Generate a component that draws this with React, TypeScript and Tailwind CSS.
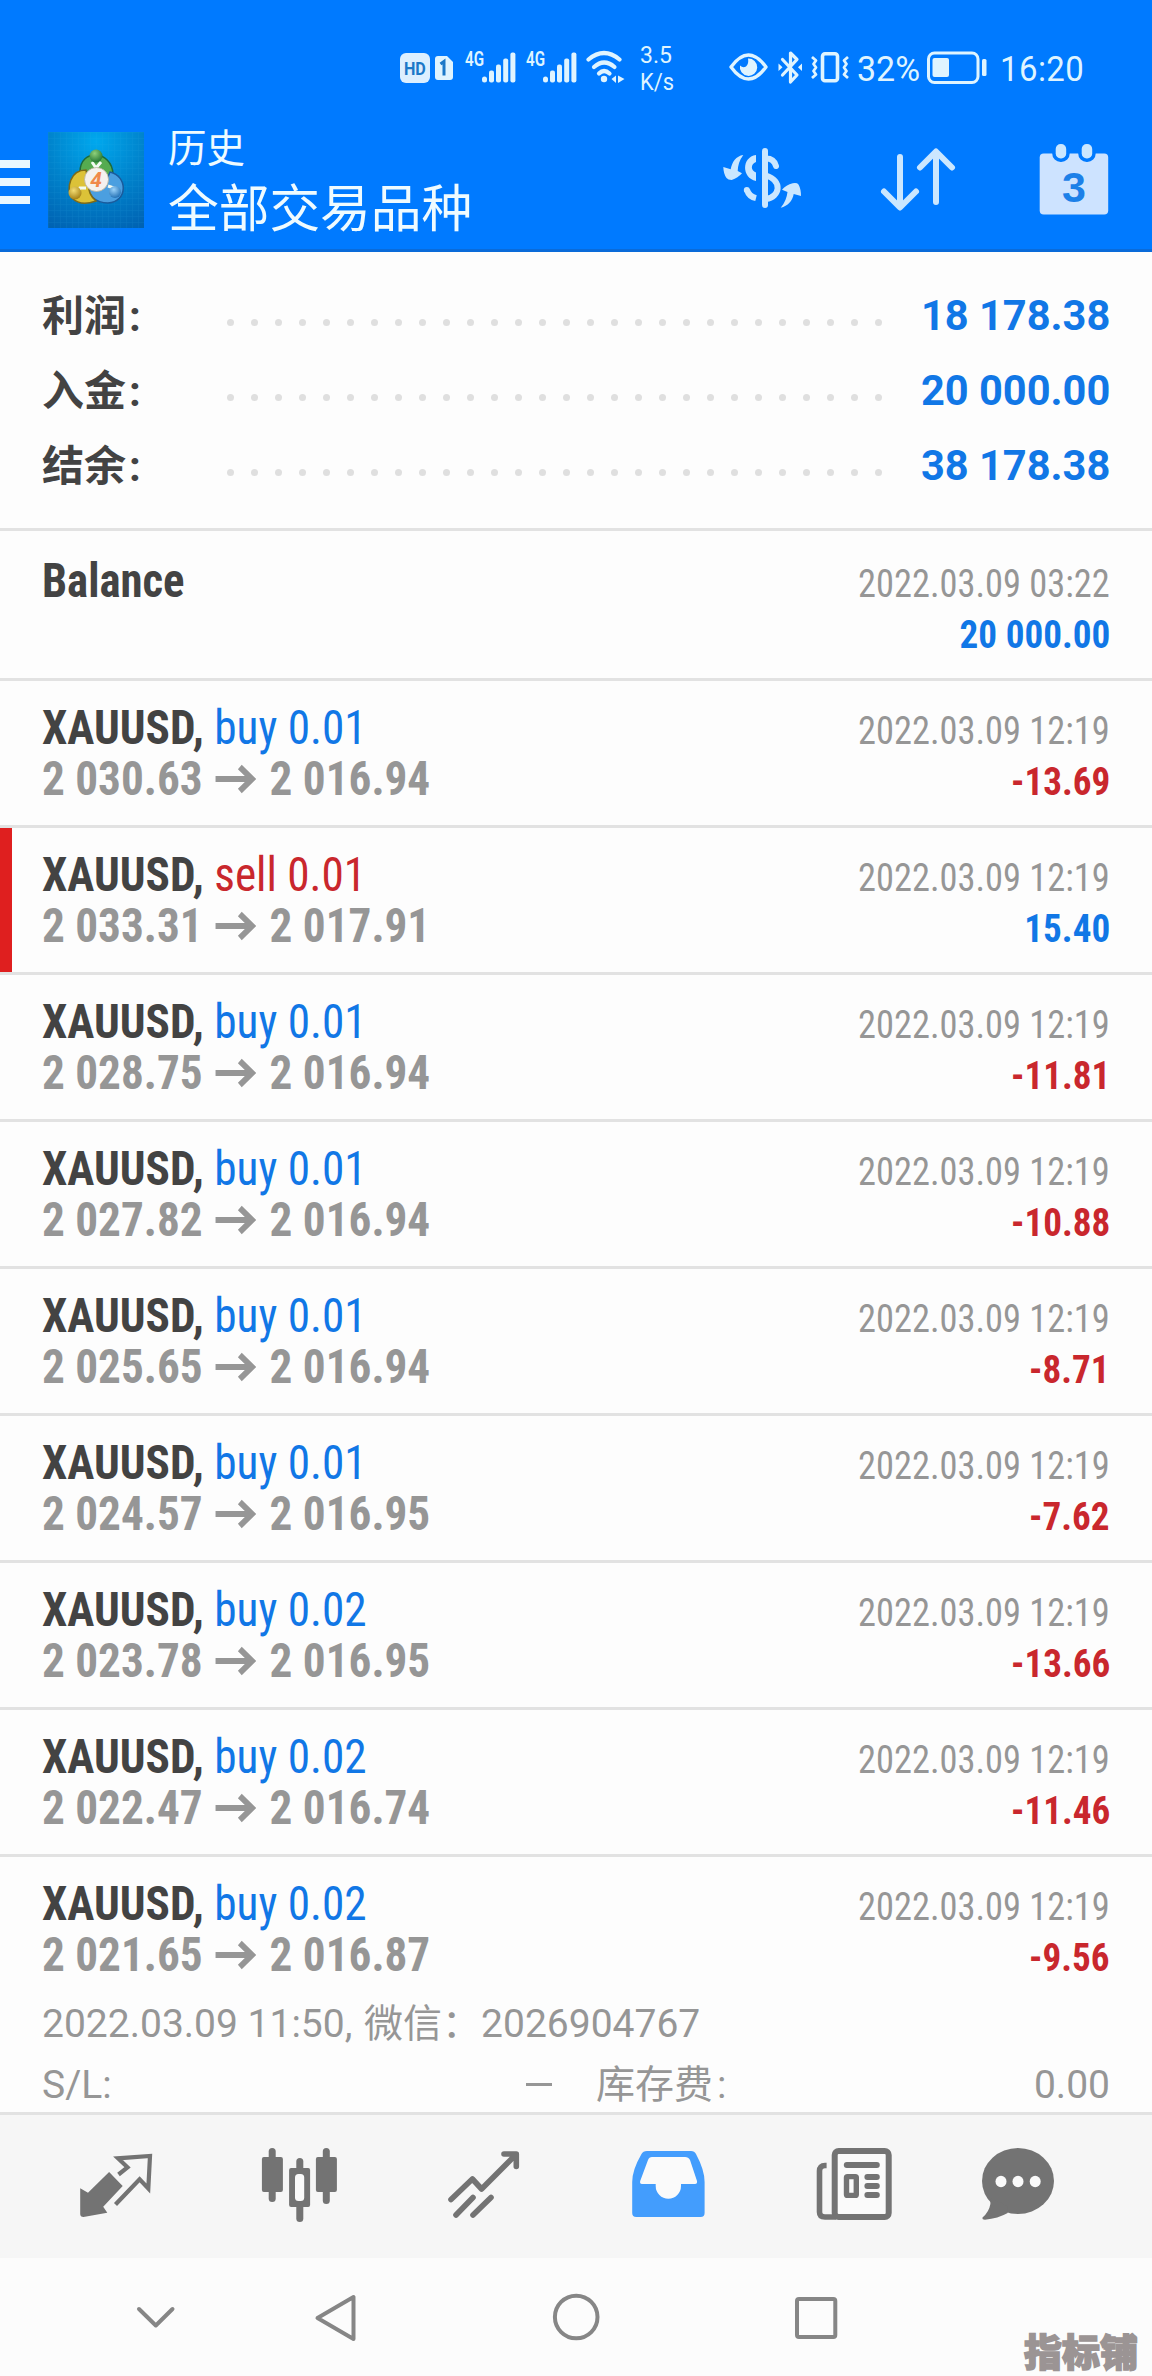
import type { ReactNode } from 'react';

interface Deal {
  side: 'buy' | 'sell';
  volume: string;
  open: string;
  close: string;
  profit: string;
}

const TIME = '2022.03.09 12:19';

const summary = [
  { label: '利润', value: '18 178.38' },
  { label: '入金', value: '20 000.00' },
  { label: '结余', value: '38 178.38' },
];

const deals: Deal[] = [
  { side: 'buy', volume: '0.01', open: '2 030.63', close: '2 016.94', profit: '-13.69' },
  { side: 'sell', volume: '0.01', open: '2 033.31', close: '2 017.91', profit: '15.40' },
  { side: 'buy', volume: '0.01', open: '2 028.75', close: '2 016.94', profit: '-11.81' },
  { side: 'buy', volume: '0.01', open: '2 027.82', close: '2 016.94', profit: '-10.88' },
  { side: 'buy', volume: '0.01', open: '2 025.65', close: '2 016.94', profit: '-8.71' },
  { side: 'buy', volume: '0.01', open: '2 024.57', close: '2 016.95', profit: '-7.62' },
  { side: 'buy', volume: '0.02', open: '2 023.78', close: '2 016.95', profit: '-13.66' },
  { side: 'buy', volume: '0.02', open: '2 022.47', close: '2 016.74', profit: '-11.46' },
  { side: 'buy', volume: '0.02', open: '2 021.65', close: '2 016.87', profit: '-9.56' },
];

function Signal() {
  return (
    <div className="flex w-[61px] items-start">
      <span className="-mt-[3px] w-[17px] origin-left scale-x-[0.76] text-[20px] leading-[20px] font-semibold">4G</span>
      <svg className="h-[31px] w-[34px] shrink-0" viewBox="0 0 34 31" fill="currentColor">
        <rect x="0" y="24.5" width="5" height="6" rx="2.5" />
        <rect x="7" y="18.5" width="5" height="12" rx="2" />
        <rect x="14" y="12.5" width="5" height="18" rx="2" />
        <rect x="21.2" y="6.5" width="5" height="24" rx="2" />
        <rect x="28.4" y="0.5" width="5" height="30" rx="2" />
      </svg>
    </div>
  );
}

function StatusBar() {
  return (
    <div className="flex h-[110px] items-start pt-[50px] pl-[400px] text-[#dff4ff]">
      <div className="mt-[3px] flex h-[30px] w-[30px] items-center justify-center rounded-[6px] bg-[#dcefff] text-[19px] leading-none font-bold text-[#1b78c8]">
        <span className="scale-x-[0.85]">HD</span>
      </div>
      <svg className="mt-[6px] ml-[5px] h-[24px] w-[18px]" viewBox="0 0 18 24">
        <path d="M3 0H12L18 6V21a3 3 0 0 1-3 3H3a3 3 0 0 1-3-3V3a3 3 0 0 1 3-3Z" fill="currentColor" />
        <path d="M5.5 8L9 5.5V19.5" fill="none" stroke="#1b78c8" strokeWidth="3" />
      </svg>
      <div className="mt-[1.5px] ml-[12px] flex">
        <Signal />
        <Signal />
      </div>
      <svg className="-ml-[1px] h-[34px] w-[40px]" viewBox="0 0 40 34" fill="none" stroke="currentColor" strokeWidth="4.2" strokeLinecap="round">
        <path d="M2.5 9.5Q18 -3.5 33.5 9.5" />
        <path d="M8 17Q18 8 28.5 17" />
        <path d="M13 23.5Q18 18.5 23.5 23.5" />
        <circle cx="18" cy="29" r="3.2" fill="currentColor" stroke="none" />
        <path d="M30 25.5V33L25.5 29ZM32 25.5V33L38.5 29Z" fill="currentColor" stroke="none" />
      </svg>
      <div className="-mt-[8px] ml-[14px] w-[89px] text-[23px] leading-[27px]">
        <div>3.5</div>
        <div className="origin-left scale-x-[0.95]">K/s</div>
      </div>
      <svg className="mt-[3px] h-[28px] w-[39px]" viewBox="0 0 39 28" fill="none" stroke="currentColor" strokeWidth="3.4">
        <path d="M2 14Q19.5 -10 37 14Q19.5 38 2 14Z" strokeLinejoin="round" />
        <path d="M19 5.5A8.7 8.7 0 1 1 11 12.5Q14 15.5 17 13.5Q20 11 19 5.5Z" fill="currentColor" stroke="none" />
      </svg>
      <svg className="ml-[10px] h-[35px] w-[25px]" viewBox="0 0 25 35" fill="none" stroke="currentColor" strokeWidth="3.2" strokeLinejoin="round" strokeLinecap="round">
        <path d="M4.5 9.5L19 25L12.5 32V3L19 9.5L4.5 25" />
        <path d="M0.5 13.5L4.5 17.3L0.5 21ZM24 13.5L20 17.3L24 21Z" fill="currentColor" stroke="none" />
      </svg>
      <svg className="mt-[2px] ml-[8px] h-[31px] w-[38px]" viewBox="0 0 38 31" fill="none" stroke="currentColor" strokeLinejoin="round">
        <rect x="11.5" y="1.8" width="15" height="27" rx="2.5" strokeWidth="3.6" />
        <path d="M1 5L5 8.5L2.5 12L5 15.5L2.5 19L5 22.5L1 26M37 5L33 8.5L35.5 12L33 15.5L35.5 19L33 22.5L37 26" strokeWidth="2.8" />
      </svg>
      <span className="ml-[8px] w-[68px] origin-left scale-x-[0.97] text-[35px] leading-[40px]">32%</span>
      <svg className="mt-[1px] ml-[2px] h-[33px] w-[60px]" viewBox="0 0 60 33" fill="none" stroke="currentColor">
        <rect x="1.5" y="2" width="49.5" height="29.5" rx="6" strokeWidth="3" />
        <rect x="5.5" y="7" width="16.5" height="19" rx="2" fill="currentColor" stroke="none" />
        <rect x="55" y="8" width="4.5" height="17" rx="1.5" fill="currentColor" stroke="none" />
      </svg>
      <span className="ml-[13px] origin-left scale-x-[0.94] text-[35px] leading-[40px] tracking-[0.5px]">16:20</span>
    </div>
  );
}

function AppLogo() {
  return (
    <svg className="h-[96px] w-[96px]" viewBox="0 0 96 96">
      <defs>
        <radialGradient id="logoBg" cx="0.5" cy="0.1" r="1">
          <stop offset="0" stopColor="#00a8ee" />
          <stop offset="0.5" stopColor="#0083cc" />
          <stop offset="1" stopColor="#0062b2" />
        </radialGradient>
        <pattern id="logoGrid" width="6" height="6" patternUnits="userSpaceOnUse">
          <path d="M0 0H6M0 0V6" stroke="#35b4ee" strokeWidth="0.8" opacity="0.2" />
        </pattern>
        <radialGradient id="ballG" cx="0.4" cy="0.3" r="0.8">
          <stop offset="0" stopColor="#8fd07a" />
          <stop offset="1" stopColor="#176b2b" />
        </radialGradient>
        <radialGradient id="ballY" cx="0.4" cy="0.3" r="0.8">
          <stop offset="0" stopColor="#f3dd74" />
          <stop offset="1" stopColor="#9a7408" />
        </radialGradient>
        <radialGradient id="ballB" cx="0.4" cy="0.3" r="0.8">
          <stop offset="0" stopColor="#9ad2fa" />
          <stop offset="1" stopColor="#1565ad" />
        </radialGradient>
      </defs>
      <rect width="96" height="96" fill="url(#logoBg)" />
      <rect width="96" height="96" fill="url(#logoGrid)" />
      <g strokeWidth="1.5">
        <path d="M32 40C32 16 64 18 65 42C65 52 60 58 56 56L36 42Z" fill="#55ab50" stroke="#1d6a3a" />
        <path d="M62 40C80 44 80 70 60 71C46 71 41 62 40 56L56 54Z" fill="#4b9fe0" stroke="#1a5b9c" />
        <path d="M38 38C22 38 18 56 24 66C32 74 42 71 48 69Q40 62 41 54Z" fill="#dcc238" stroke="#7d6a18" />
        <path d="M44 30L48 36L53 30M28 66L32 56L38 56M60 54L66 56L64 64" fill="none" stroke="#f2fbf2" strokeWidth="3" />
      </g>
      <circle cx="48" cy="24" r="6.5" fill="url(#ballG)" />
      <circle cx="27" cy="61" r="6.5" fill="url(#ballY)" />
      <circle cx="67" cy="60" r="6" fill="url(#ballB)" />
      <circle cx="48.5" cy="47.5" r="12" fill="#f4f1ee" stroke="#b8b09a" strokeWidth="0.8" />
      <text x="48" y="55" textAnchor="middle" fontSize="21" fontStyle="italic" fontWeight="700" fill="#f0894a" fontFamily="Roboto, sans-serif">4</text>
    </svg>
  );
}

function AppHeader() {
  return (
    <div className="flex h-[142px] items-start border-b-[3px] border-[#0a6bd9]">
      <div className="mt-[50px] flex w-[30px] flex-col gap-[10px]">
        <span className="h-[8px] bg-[#e9f8ff]" />
        <span className="h-[8px] bg-[#e9f8ff]" />
        <span className="h-[8px] bg-[#e9f8ff]" />
      </div>
      <div className="mt-[22px] ml-[18px]">
        <AppLogo />
      </div>
      <div className="mt-[14px] ml-[24px] w-[552px] text-[#effbff]">
        <div className="text-[38.5px] leading-[50px]">历史</div>
        <div className="text-[50.7px] leading-[71px]">全部交易品种</div>
      </div>
      <div className="flex text-[#cbe7ff]">
        <svg className="mt-[34px] h-[68px] w-[84px]" viewBox="0 0 84 68" fill="none" stroke="currentColor" strokeWidth="6">
          <rect x="42" y="4" width="6" height="60" rx="3" fill="currentColor" stroke="none" />
          <path d="M36 11C21.5 13 21.5 34 36 37V28.5C30.5 26.5 30.5 20 36 18Z" fill="currentColor" stroke="none" />
          <path d="M27 46Q29 52.5 36 54.2" />
          <circle cx="26.8" cy="46" r="3" fill="currentColor" stroke="none" />
          <path d="M46 14.5Q54 14.5 56 22" strokeLinecap="round" />
          <path d="M46 31.5C63 37 60 53 46 55" />
          <path d="M23.3 11C16 12 12 18 10.7 25.3L3.3 23Q3.5 30 6.5 34Q8 36 11.7 36Q18 34 22 29.3L17.7 27Q18 18 23.3 11Z" fill="currentColor" stroke="none" />
          <path d="M60.7 63.7C68 62 72.5 57 73.7 50L81 52Q81 45 78.5 40.5Q77 38.5 72.7 39.3Q66 41 62 45.7L67.5 48Q66.5 57 60.7 63.7Z" fill="currentColor" stroke="none" />
        </svg>
        <svg className="mt-[34px] ml-[72px] h-[68px] w-[80px]" viewBox="0 0 80 68" fill="none" stroke="currentColor" strokeWidth="6" strokeLinecap="round" strokeLinejoin="round">
          <path d="M24 13V63M8 47.5L24 63.5L40 47.5" />
          <path d="M60 58V8M44 23.5L60 7.5L76 23.5" />
        </svg>
        <svg className="mt-[30px] ml-[80px] h-[76px] w-[76px]" viewBox="0 0 76 76">
          <rect x="3.7" y="13.5" width="68.5" height="61" rx="4" fill="#cde3ff" />
          <g fill="#cbe7ff" stroke="#007aff" strokeWidth="7" paintOrder="stroke">
            <rect x="19.7" y="4" width="10.5" height="14.5" rx="5" />
            <rect x="45.7" y="4" width="10.5" height="14.5" rx="5" />
          </g>
          <text x="38" y="61.5" textAnchor="middle" fontSize="43" fontWeight="700" fill="#1c80e8" fontFamily="'Liberation Sans', sans-serif">3</text>
        </svg>
      </div>
    </div>
  );
}

function SummaryRow({ label, value }: { label: string; value: string }) {
  return (
    <div className="flex h-[75px] items-start px-[42px]">
      <span className="w-[185px] text-[42px] leading-[77px] font-bold text-[#434343]">
        {label}
        <span className="ml-[3px]">:</span>
      </span>
      <span className="mt-[41px] flex gap-[17px]">
        {Array.from({ length: 28 }, (_, i) => (
          <span key={i} className="size-[7px] rounded-full bg-[#dfdfdf]" />
        ))}
      </span>
      <span className="ml-auto origin-right scale-x-[0.99] text-[42px] leading-[75px] font-bold whitespace-nowrap text-[#1177e6]">{value}</span>
    </div>
  );
}

function RowRight({ time, profit }: { time: string; profit: string }) {
  const color = profit.startsWith('-') ? 'text-[#c9272d]' : 'text-[#1177e6]';
  return (
    <div className="mt-[4px] flex flex-col items-end text-[39px] leading-[51px] whitespace-nowrap">
      <span className="origin-right scale-x-[0.933] [font-stretch:75%] text-[#969696]">{time}</span>
      <span className={`origin-right scale-x-[0.952] [font-stretch:75%] font-bold ${color}`}>{profit}</span>
    </div>
  );
}

function DealRow({ deal, last }: { deal: Deal; last?: boolean }) {
  const sell = deal.side === 'sell';
  return (
    <div className={`relative flex justify-between px-[42px] pt-[21px] ${last ? 'h-[123px]' : 'h-[147px] border-b-[3px] border-[#e2e2e2]'}`}>
      {sell && <span className="absolute top-0 left-0 h-[144px] w-[12px] bg-[#df1f1f]" />}
      <div className="origin-left scale-x-[0.942] text-[48px] leading-[51px] whitespace-nowrap">
        <div className="[font-stretch:75%]">
          <span className="font-bold text-[#434343]">XAUUSD, </span>
          <span className={sell ? 'text-[#c9272d]' : 'text-[#1177e6]'}>
            {deal.side} {deal.volume}
          </span>
        </div>
        <div className="flex items-center font-bold text-[#969696]">
          <span className="[font-stretch:75%]">{deal.open}</span>
          <svg className="mx-[13px] h-[30px] w-[45px]" viewBox="0 0 45 30" fill="none" stroke="currentColor" strokeWidth="6">
            <path d="M0 15H40M26 3L39 15L26 27" />
          </svg>
          <span className="[font-stretch:75%]">{deal.close}</span>
        </div>
      </div>
      <RowRight time={TIME} profit={deal.profit} />
    </div>
  );
}

function TabIcon({ className, children }: { className: string; children: ReactNode }) {
  return (
    <svg className={`h-[76px] w-[80px] shrink-0 ${className}`} viewBox="0 0 80 76" fill="currentColor">
      {children}
    </svg>
  );
}

function TabBar() {
  return (
    <div className="flex h-[146px] items-start border-t-[3px] border-[#e2e2e2] bg-[#f6f6f6] pt-[33px] pl-[78px] text-[#737373]">
      <TabIcon className="">
        <path d="M2.2 40.3L10 44.7L31.1 24L44.7 38L25.2 58.7L29.3 64.7L5.5 69Q2.2 69 2.2 66Z" />
        <path d="M40.5 26.5L49.5 19.3L40 10.3L72 8L70.3 40.5L61.6 31.3L37.5 56.5" fill="none" stroke="currentColor" strokeWidth="4.2" />
      </TabIcon>
      <TabIcon className="ml-[102px]">
        <rect x="8.7" y="0" width="7" height="54" rx="3.5" />
        <rect x="1.9" y="9" width="21" height="35" rx="2" />
        <rect x="36.3" y="10" width="7" height="64" rx="3.5" />
        <rect x="29.1" y="20" width="21" height="39" rx="2" />
        <rect x="35" y="26" width="9.2" height="27" rx="3.5" fill="#fafafa" />
        <rect x="62.8" y="0" width="7" height="56" rx="3.5" />
        <rect x="55.9" y="9" width="21" height="35" rx="2" />
      </TabIcon>
      <TabIcon className="ml-[106px]">
        <g fill="none" stroke="currentColor" strokeWidth="5.6" strokeLinecap="round" strokeLinejoin="round">
          <path d="M5 51.5L26.4 31L35.6 41L70 6.5M58 6H70.3V18.5" />
          <path d="M10 67L27 49.5M27 67L45 49.5" />
        </g>
      </TabIcon>
      <TabIcon className="ml-[104px] text-[#439dfd]">
        <path d="M19 3H61Q64.5 3 66 6Q74.6 22 74.6 34V65Q74.6 69 70.6 69H6.2Q2.2 69 2.2 65V34Q2.2 22 11.5 6Q13 3 17 3Z" />
        <path d="M22 9H55Q58.5 9 60 12L67 33Q67.5 36 65 36H51V38A12.65 12.7 0 0 1 25.7 38V36H12Q9.5 36 10.2 33L18 12Q19 9 22 9Z" fill="#fafafa" />
      </TabIcon>
      <TabIcon className="ml-[104px]">
        <g fill="none" stroke="currentColor" strokeWidth="6">
          <rect x="20.7" y="3" width="54" height="66" rx="4" fill="#fafafa" />
          <path d="M12.6 17.5H11Q5.5 17.5 5.5 23V64Q5.5 69 11 69H22" strokeWidth="5.6" />
          <rect x="32.5" y="28.6" width="9.8" height="18.8" rx="1" strokeWidth="5.4" />
        </g>
        <rect x="29.8" y="14" width="36" height="6" rx="3" />
        <rect x="50.4" y="26" width="15.4" height="6" rx="3" />
        <rect x="50.4" y="35" width="15.4" height="6" rx="3" />
        <rect x="50.4" y="44" width="15.4" height="6" rx="3" />
      </TabIcon>
      <TabIcon className="ml-[86px]">
        <ellipse cx="38" cy="33" rx="36" ry="33" />
        <path d="M10.4 50V56Q9 64 2.5 69.5Q2 71.7 5 71.7Q18 70.5 27.7 65V58Z" />
        <g fill="#fafafa">
          <ellipse cx="21" cy="33.5" rx="5.5" ry="5.7" />
          <ellipse cx="38" cy="33.5" rx="5.5" ry="5.7" />
          <ellipse cx="55.2" cy="33.5" rx="5.5" ry="5.7" />
        </g>
      </TabIcon>
    </div>
  );
}

function NavBar() {
  return (
    <div className="relative flex h-[118px] items-start bg-[#fcfcfc] pt-[34px] text-[#868686]">
      <svg className="ml-[130px] h-[52px] w-[52px]" viewBox="0 0 52 52" fill="none" stroke="currentColor" strokeWidth="4" strokeLinecap="round" strokeLinejoin="round">
        <path d="M9 17L25.8 33.5L42.5 17" />
      </svg>
      <svg className="ml-[128px] h-[52px] w-[52px]" viewBox="0 0 52 52" fill="none" stroke="currentColor" strokeWidth="4" strokeLinejoin="round">
        <path d="M7.5 26L43.5 5V47Z" />
      </svg>
      <svg className="ml-[188px] h-[52px] w-[52px]" viewBox="0 0 52 52" fill="none" stroke="currentColor" strokeWidth="4">
        <circle cx="26.2" cy="25" r="21.3" />
      </svg>
      <svg className="ml-[188px] h-[52px] w-[52px]" viewBox="0 0 52 52" fill="none" stroke="currentColor" strokeWidth="4">
        <rect x="7" y="7" width="38.3" height="38" rx="2" />
      </svg>
      <span className="absolute right-[14px] bottom-[2px] text-[38px] leading-[42px] font-black text-[#9b9494] [-webkit-text-stroke:1.5px_#9b9494]">
        指标铺
      </span>
    </div>
  );
}

export default function App() {
  return (
    <div className="h-[2376px] w-[1152px] overflow-hidden bg-[#fdfdfd] font-[Roboto,'Noto_Sans_CJK_SC',sans-serif]">
      <div className="bg-[#007aff]">
        <StatusBar />
        <AppHeader />
      </div>
      <div className="h-[279px] border-b-[3px] border-[#e2e2e2] pt-[26px]">
        {summary.map((row) => (
          <SummaryRow key={row.label} label={row.label} value={row.value} />
        ))}
      </div>
      <div className="flex h-[150px] items-start justify-between border-b-[3px] border-[#e2e2e2] px-[42px] pt-[24px]">
        <span className="origin-left scale-x-[0.932] [font-stretch:75%] text-[48px] leading-[51px] font-bold text-[#434343]">Balance</span>
        <RowRight time="2022.03.09 03:22" profit="20 000.00" />
      </div>
      {deals.map((deal, i) => (
        <DealRow key={i} deal={deal} last={i === deals.length - 1} />
      ))}
      <div className="h-[132px] px-[42px] pt-[14px] text-[39px] leading-[61px] whitespace-nowrap text-[#969696]">
        <div>
          2022.03.09 11:50, <span className="ml-[2px]">微信：</span>2026904767
        </div>
        <div className="flex">
          <span className="w-[484px]">S/L:</span>
          <span className="mt-[28px] h-[3px] w-[26px] bg-[#969696]" />
          <span className="ml-[44px]">
            库存费<span className="ml-[4px]">:</span>
          </span>
          <span className="ml-auto">0.00</span>
        </div>
      </div>
      <TabBar />
      <NavBar />
    </div>
  );
}
